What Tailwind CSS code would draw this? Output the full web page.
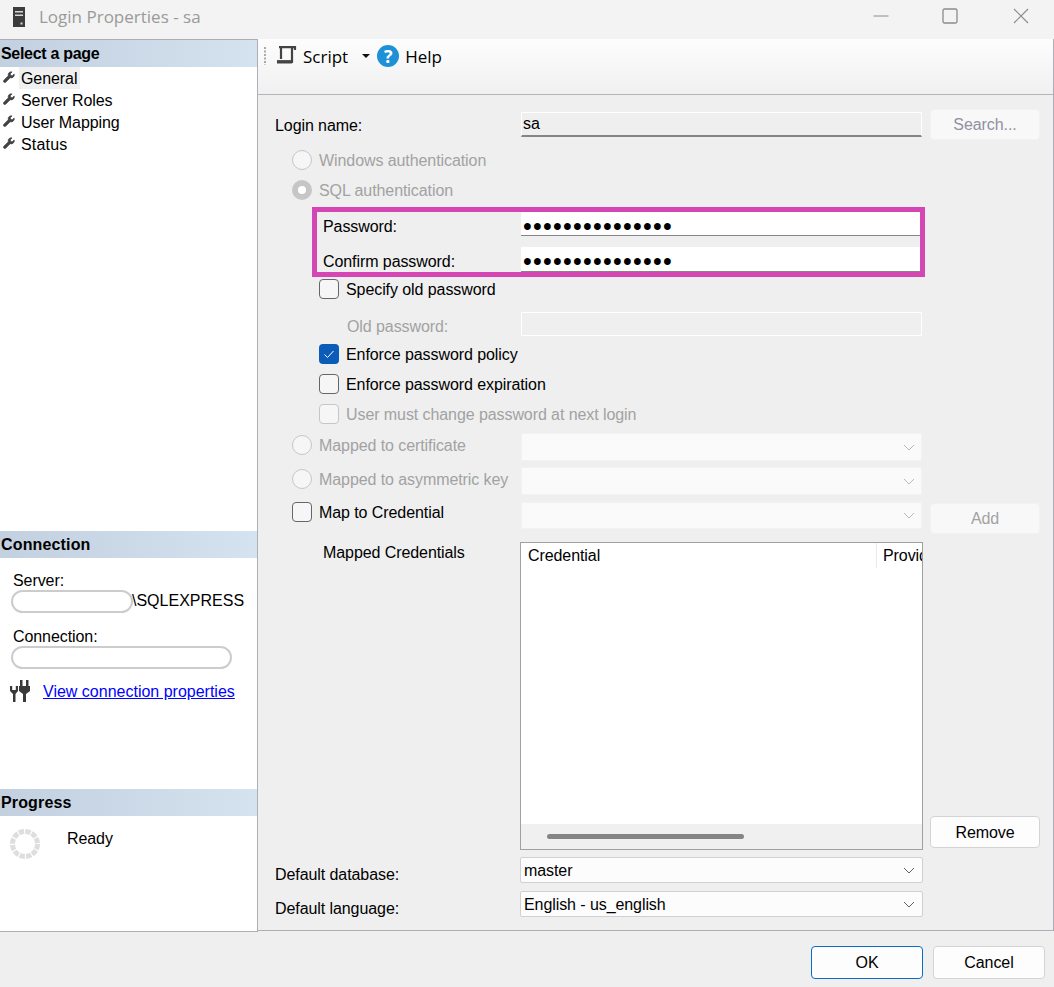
<!DOCTYPE html>
<html lang="en">
<head>
    <meta charset="UTF-8">
    <meta name="viewport" content="width=device-width, initial-scale=1.0">
    <title>Login Properties - sa</title>
    <script src="https://cdn.jsdelivr.net/npm/@tailwindcss/browser@4"></script>
</head>
<body class="bg-[#efefef] text-black font-['Liberation_Sans',sans-serif] text-[16px] leading-none tracking-[-0.08px]">
<div class="w-[1054px] h-[987px] overflow-hidden flex flex-col">

    <!-- Title bar -->
    <div class="h-[39px] shrink-0 bg-[#f3f3f3] flex items-center relative">
        <svg class="ml-[13px] w-[12px] h-[20px] -mt-[6px]" viewBox="0 0 12 20">
            <rect width="12" height="20" fill="#3c3c3c"/>
            <rect x="2" y="4" width="8" height="1.5" fill="#d8d8d8"/>
            <rect x="2" y="7.5" width="8" height="1.5" fill="#d8d8d8"/>
            <rect x="7.5" y="15.5" width="2" height="2" fill="#d8d8d8"/>
        </svg>
        <span class="ml-[14px] -mt-[6px] font-['Open_Sans',sans-serif] text-[17px] tracking-normal text-[#9a9a9a]">Login Properties - sa</span>
        <div class="ml-auto flex items-center -mt-[7px]">
            <svg class="w-[16px] h-[16px]" viewBox="0 0 16 16"><path d="M0.5 8H15.5" stroke="#8c8c8c" stroke-width="1" fill="none"/></svg>
            <svg class="ml-[53px] w-[16px] h-[16px]" viewBox="0 0 16 16"><rect x="1" y="1" width="14" height="14" rx="1.5" stroke="#8c8c8c" stroke-width="1.3" fill="none"/></svg>
            <svg class="ml-[55px] mr-[25px] w-[16px] h-[16px]" viewBox="0 0 16 16"><path d="M1 1L15 15M15 1L1 15" stroke="#8c8c8c" stroke-width="1.2" fill="none"/></svg>
        </div>
    </div>

    <div class="flex flex-1 min-h-0">
        <!-- Left pane -->
        <div class="w-[258px] h-[893px] shrink-0 bg-white border-t border-r border-b border-[#aeaeb6] flex flex-col">
            <div class="h-[491px] shrink-0">
                <div class="h-[27px] flex items-center pl-px font-bold tracking-[-0.3px] bg-gradient-to-r from-[#c2d0df] to-[#d5e2f0]">Select a page</div>
                <div class="h-[22px] flex items-center pl-[3px]">
                    <svg class="w-[12px] h-[12px] -mt-[2px]" viewBox="0 0 14 14"><path d="M9.5 1a3.5 3.5 0 0 0-3.3 4.6L1 10.8a1.5 1.5 0 0 0 2.2 2.2l5.2-5.2A3.5 3.5 0 0 0 13 3.5L10.8 5.6 8.8 5 8.5 3.2 10.6 1.2A3.5 3.5 0 0 0 9.5 1z" fill="#444" stroke="#444" stroke-width="0.8"/></svg>
                    <span class="ml-[4px] h-[22px] w-[61px] pl-[2px] pt-[2px] flex items-center bg-[#f0f0f0]">General</span>
                </div>
                <div class="h-[22px] flex items-center pl-[3px]">
                    <svg class="w-[12px] h-[12px] -mt-[2px]" viewBox="0 0 14 14"><path d="M9.5 1a3.5 3.5 0 0 0-3.3 4.6L1 10.8a1.5 1.5 0 0 0 2.2 2.2l5.2-5.2A3.5 3.5 0 0 0 13 3.5L10.8 5.6 8.8 5 8.5 3.2 10.6 1.2A3.5 3.5 0 0 0 9.5 1z" fill="#444" stroke="#444" stroke-width="0.8"/></svg>
                    <span class="ml-[6px] pt-[2px]">Server Roles</span>
                </div>
                <div class="h-[22px] flex items-center pl-[3px]">
                    <svg class="w-[12px] h-[12px] -mt-[2px]" viewBox="0 0 14 14"><path d="M9.5 1a3.5 3.5 0 0 0-3.3 4.6L1 10.8a1.5 1.5 0 0 0 2.2 2.2l5.2-5.2A3.5 3.5 0 0 0 13 3.5L10.8 5.6 8.8 5 8.5 3.2 10.6 1.2A3.5 3.5 0 0 0 9.5 1z" fill="#444" stroke="#444" stroke-width="0.8"/></svg>
                    <span class="ml-[6px] pt-[2px]">User Mapping</span>
                </div>
                <div class="h-[22px] flex items-center pl-[3px]">
                    <svg class="w-[12px] h-[12px] -mt-[2px]" viewBox="0 0 14 14"><path d="M9.5 1a3.5 3.5 0 0 0-3.3 4.6L1 10.8a1.5 1.5 0 0 0 2.2 2.2l5.2-5.2A3.5 3.5 0 0 0 13 3.5L10.8 5.6 8.8 5 8.5 3.2 10.6 1.2A3.5 3.5 0 0 0 9.5 1z" fill="#444" stroke="#444" stroke-width="0.8"/></svg>
                    <span class="ml-[6px] pt-[2px] tracking-[0.2px]">Status</span>
                </div>
            </div>

            <div class="h-[258px] shrink-0">
                <div class="h-[27px] flex items-center pl-px font-bold tracking-[0.15px] bg-gradient-to-r from-[#c2d0df] to-[#d5e2f0]">Connection</div>
                <div class="pl-[13px] mt-[15px]">Server:</div>
                <div class="flex items-center pl-[11px] mt-[1px] h-[22px]">
                    <div class="w-[122px] h-[23px] shrink-0 bg-white border-[2px] border-[#cccccc] rounded-full"></div>
                    <span class="tracking-normal -ml-[1px]">\SQLEXPRESS</span>
                </div>
                <div class="pl-[13px] mt-[17px]">Connection:</div>
                <div class="ml-[11px] mt-[1px] w-[221px] h-[23px] bg-white border-[2px] border-[#cccccc] rounded-full"></div>
                <div class="flex items-center pl-[10px] mt-[11px]">
                    <svg class="w-[22px] h-[23px]" viewBox="0 0 22 23" fill="#3a3a3a">
                        <rect x="10" y="0" width="2.5" height="6"/><rect x="16" y="0" width="2.5" height="6"/>
                        <path d="M9 6H20V11L16 14V22H13V14L9 11Z"/>
                        <path d="M0 6H2.2V10H5.8V6H8V11L5.5 14V22H3V14L0 11Z"/>
                    </svg>
                    <a href="#" class="ml-[11px] text-[#0000ff] underline tracking-normal">View connection properties</a>
                </div>
            </div>

            <div class="flex-1">
                <div class="h-[27px] flex items-center pl-px font-bold tracking-[0.15px] bg-gradient-to-r from-[#c2d0df] to-[#d5e2f0]">Progress</div>
                <div class="flex items-start pl-[10px] pt-[13px]">
                    <svg class="w-[30px] h-[30px]" viewBox="0 0 30 30"><circle cx="15" cy="15" r="12.5" fill="none" stroke="#dedede" stroke-width="5" stroke-dasharray="5.3 1.24"/></svg>
                    <span class="ml-[27px] mt-[2px]">Ready</span>
                </div>
            </div>
        </div>

        <!-- Right pane -->
        <div class="flex-1 h-[892px] border-r border-b border-[#aeaeb6] flex flex-col min-w-0">
            <div class="h-[56px] shrink-0 border-b border-[#b4b4bc] bg-gradient-to-b from-[#fdfdfd] to-[#f0f0f0] flex items-center pb-[22px] font-['Open_Sans',sans-serif] text-[17px] tracking-normal">
                <svg class="ml-[6px] w-[2px] h-[18px]" viewBox="0 0 2 18"><path d="M1 0V18" stroke="#aaaaaa" stroke-width="2" stroke-dasharray="2 1.5" fill="none"/></svg>
                <svg class="ml-[10px] w-[22px] h-[19px]" viewBox="0 0 22 19" fill="none" stroke="#444" stroke-width="2.2">
                    <path d="M3 1.2H19V4"/>
                    <path d="M5 1V13"/>
                    <path d="M16 1V17"/>
                    <path d="M1 15.8H16" stroke-width="3.4"/>
                </svg>
                <span class="ml-[5px] pt-[2px]">Script</span>
                <svg class="ml-[14px] w-[8px] h-[4px]" viewBox="0 0 8 4"><path d="M0 0H8L4 4Z" fill="#111"/></svg>
                <div class="ml-[7px] w-[22px] h-[22px] rounded-full bg-[#1e90d8] text-white font-bold text-[18px] flex items-center justify-center">?</div>
                <span class="ml-[6px] pt-[2px]">Help</span>
            </div>

            <div class="flex-1 pl-[17px] pt-[14px] flex flex-col">
                <!-- Login name -->
                <div class="flex h-[31px] items-center">
                    <span class="w-[246px] shrink-0 pt-[2px]">Login name:</span>
                    <div class="w-[401px] h-[25px] flex items-center pl-px bg-[#efefef] border-t border-x border-white border-b-[2px] border-b-[#858585]">sa</div>
                    <div class="ml-[8px] w-[110px] h-[31px] flex items-center justify-center rounded-[4px] bg-[#f8f8f8] border border-[#f2f2f2] text-[#9090a0]">Search...</div>
                </div>

                <div class="flex items-center h-[20px] mt-[10px] ml-[17px] text-[#a2a2a2]">
                    <div class="w-[20px] h-[20px] rounded-full bg-[#f6f6f6] border border-[#c6c6c6]"></div>
                    <span class="ml-[7px] pt-[2px]">Windows authentication</span>
                </div>
                <div class="flex items-center h-[20px] mt-[10px] ml-[17px] text-[#a2a2a2]">
                    <div class="w-[20px] h-[20px] rounded-full bg-[#c6c6c6] flex items-center justify-center"><div class="w-[8px] h-[8px] rounded-full bg-white"></div></div>
                    <span class="ml-[7px] pt-[2px]">SQL authentication</span>
                </div>

                <!-- Password box -->
                <div class="mt-[7px] ml-[37px] w-[613px] h-[70px] border-[5px] border-[#d545b3]">
                    <div class="flex h-[24px]">
                        <span class="w-[204px] pl-[6px] pt-[6px] self-center">Password:</span>
                        <div class="flex-1 flex items-center pl-[2px] pt-[6px] bg-white border-b border-b-[#858585] text-[25px] tracking-[1.25px]">•••••••••••••••</div>
                    </div>
                    <div class="flex h-[25px] mt-[11px]">
                        <span class="w-[204px] pl-[6px] pt-[4px] self-center">Confirm password:</span>
                        <div class="flex-1 flex items-center pl-[2px] pt-[4px] bg-white border-b border-b-[#858585] text-[25px] tracking-[1.25px]">•••••••••••••••</div>
                    </div>
                </div>

                <div class="flex items-center h-[20px] mt-[2px] ml-[44px]">
                    <div class="w-[20px] h-[20px] rounded-[4px] bg-[#f6f6f6] border border-[#666666]"></div>
                    <span class="ml-[7px] pt-[2px]">Specify old password</span>
                </div>

                <div class="flex items-center h-[24px] mt-[13px]">
                    <span class="w-[246px] pl-[72px] pt-[6px] text-[#a2a2a2]">Old password:</span>
                    <div class="w-[401px] h-[24px] bg-[#efefef] border border-white"></div>
                </div>

                <div class="flex items-center h-[20px] mt-[8px] ml-[44px]">
                    <div class="w-[20px] h-[20px] rounded-[4px] bg-[#0b5cb8] flex items-center justify-center">
                        <svg class="w-[12px] h-[12px]" viewBox="0 0 12 12"><path d="M1.5 6.5L4.5 9.5L10.5 3" stroke="#fff" stroke-width="1" fill="none"/></svg>
                    </div>
                    <span class="ml-[7px] pt-[2px]">Enforce password policy</span>
                </div>
                <div class="flex items-center h-[20px] mt-[10px] ml-[44px]">
                    <div class="w-[20px] h-[20px] rounded-[4px] bg-[#f6f6f6] border border-[#666666]"></div>
                    <span class="ml-[7px] pt-[2px]">Enforce password expiration</span>
                </div>
                <div class="flex items-center h-[20px] mt-[10px] ml-[44px] text-[#a2a2a2]">
                    <div class="w-[20px] h-[20px] rounded-[4px] bg-[#f6f6f6] border border-[#c6c6c6]"></div>
                    <span class="ml-[7px] pt-[2px]">User must change password at next login</span>
                </div>

                <div class="flex items-center h-[28px] mt-[9px]">
                    <div class="w-[246px] flex items-center pl-[17px] -mt-[4px] text-[#a2a2a2]">
                        <div class="w-[20px] h-[20px] rounded-full bg-[#f6f6f6] border border-[#c6c6c6]"></div>
                        <span class="ml-[7px] pt-[2px]">Mapped to certificate</span>
                    </div>
                    <div class="w-[401px] h-[28px] flex items-center justify-end pr-[6px] rounded-[2px] bg-[#fafafa] border border-[#f2f2f2]">
                        <svg class="w-[12px] h-[7px]" viewBox="0 0 12 7"><path d="M1 1L6 6L11 1" stroke="#b8b8b8" stroke-width="1" fill="none"/></svg>
                    </div>
                </div>
                <div class="flex items-center h-[28px] mt-[6px]">
                    <div class="w-[246px] flex items-center pl-[17px] -mt-[4px] text-[#a2a2a2]">
                        <div class="w-[20px] h-[20px] rounded-full bg-[#f6f6f6] border border-[#c6c6c6]"></div>
                        <span class="ml-[7px] pt-[2px]">Mapped to asymmetric key</span>
                    </div>
                    <div class="w-[401px] h-[28px] flex items-center justify-end pr-[6px] rounded-[2px] bg-[#fafafa] border border-[#f2f2f2]">
                        <svg class="w-[12px] h-[7px]" viewBox="0 0 12 7"><path d="M1 1L6 6L11 1" stroke="#b8b8b8" stroke-width="1" fill="none"/></svg>
                    </div>
                </div>
                <div class="flex items-start h-[32px] mt-[7px]">
                    <div class="w-[246px] flex items-center pl-[17px]">
                        <div class="w-[20px] h-[20px] rounded-[4px] bg-[#f6f6f6] border border-[#666666]"></div>
                        <span class="ml-[7px] pt-[2px]">Map to Credential</span>
                    </div>
                    <div class="w-[401px] h-[27px] flex items-center justify-end pr-[6px] rounded-[2px] bg-[#fafafa] border border-[#f2f2f2]">
                        <svg class="w-[12px] h-[7px]" viewBox="0 0 12 7"><path d="M1 1L6 6L11 1" stroke="#b8b8b8" stroke-width="1" fill="none"/></svg>
                    </div>
                    <div class="ml-[8px] mt-px w-[110px] h-[31px] flex items-center justify-center rounded-[4px] bg-[#f8f8f8] border border-[#f2f2f2] text-[#a2a2a2]">Add</div>
                </div>

                <!-- Mapped credentials grid -->
                <div class="flex h-[308px] mt-[8px]">
                    <span class="w-[245px] shrink-0 pl-[48px] pt-[3px]">Mapped Credentials</span>
                    <div class="w-[403px] h-[308px] shrink-0 bg-white border border-[#a0a0a0] flex flex-col">
                        <div class="h-[25px] flex overflow-hidden">
                            <div class="w-[356px] shrink-0 pl-[7px] flex items-center border-r border-[#eaeaea]">Credential</div>
                            <div class="pl-[6px] flex items-center">Provider</div>
                        </div>
                        <div class="flex-1"></div>
                        <div class="h-[25px] bg-[#f0f0f0] flex items-center pl-[26px]">
                            <div class="w-[197px] h-[5px] rounded-full bg-[#858585]"></div>
                        </div>
                    </div>
                    <div class="self-end ml-[7px] mb-[2px] w-[110px] h-[32px] pt-[2px] flex items-center justify-center rounded-[4px] bg-[#fdfdfd] border border-[#d4d4d4]">Remove</div>
                </div>

                <div class="flex h-[26px] mt-[7px]">
                    <span class="w-[245px] pt-[10px]">Default database:</span>
                    <div class="w-[403px] flex items-center justify-between pl-[3px] pr-[7px] rounded-[2px] bg-[#fcfcfc] border border-[#d0d0d0]">
                        <span class="pt-[2px]">master</span>
                        <svg class="w-[12px] h-[7px]" viewBox="0 0 12 7"><path d="M1 1L6 6L11 1" stroke="#606060" stroke-width="1" fill="none"/></svg>
                    </div>
                </div>
                <div class="flex h-[26px] mt-[8px]">
                    <span class="w-[245px] pt-[10px]">Default language:</span>
                    <div class="w-[403px] flex items-center justify-between pl-[3px] pr-[7px] rounded-[2px] bg-[#fcfcfc] border border-[#d0d0d0]">
                        <span class="pt-[2px]">English - us_english</span>
                        <svg class="w-[12px] h-[7px]" viewBox="0 0 12 7"><path d="M1 1L6 6L11 1" stroke="#606060" stroke-width="1" fill="none"/></svg>
                    </div>
                </div>
            </div>
        </div>
    </div>

    <!-- Footer -->
    <div class="h-[56px] shrink-0 flex justify-end items-start pt-[15px] pr-[9px] gap-[10px]">
        <div class="w-[112px] h-[33px] flex items-center justify-center rounded-[4px] bg-[#fdfdfd] border border-[#0a6cc4]">OK</div>
        <div class="w-[112px] h-[33px] flex items-center justify-center rounded-[4px] bg-[#fdfdfd] border border-[#d4d4d4]">Cancel</div>
    </div>
</div>
</body>
</html>
